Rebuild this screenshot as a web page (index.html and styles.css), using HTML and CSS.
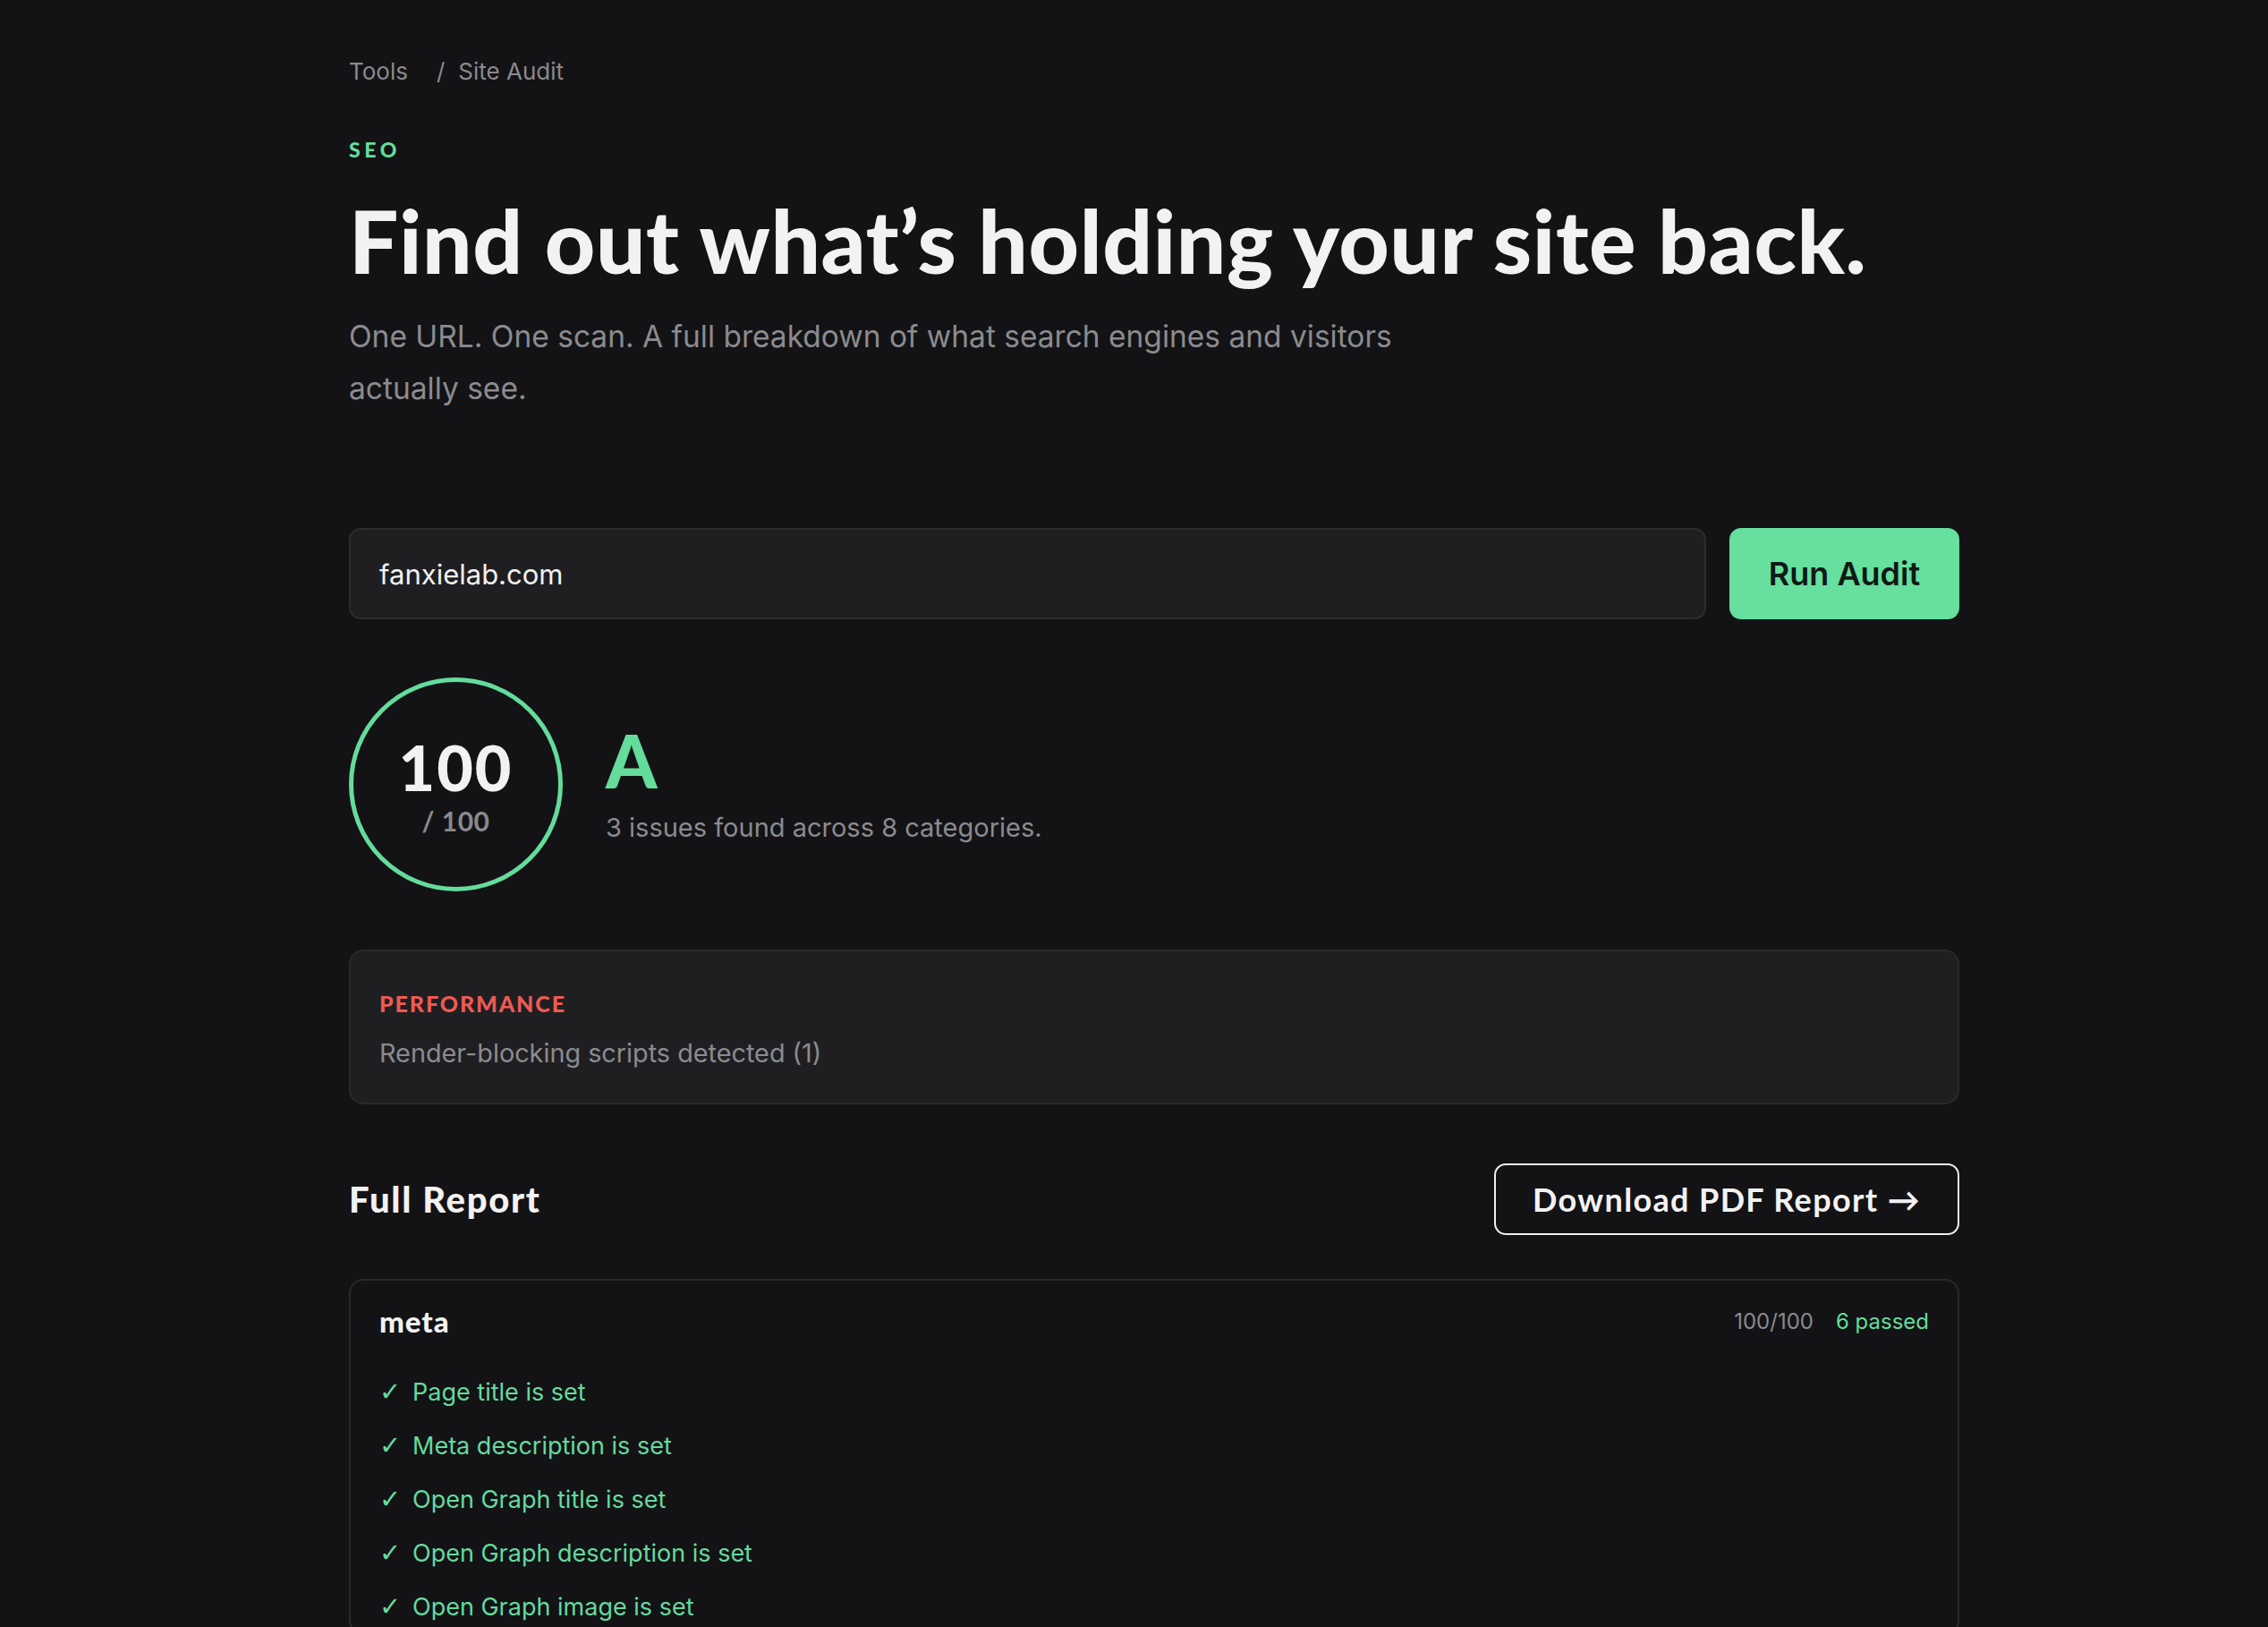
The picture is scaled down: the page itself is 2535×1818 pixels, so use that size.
FILE: index.html
```html
<!DOCTYPE html>
<html lang="en">
<head>
<meta charset="utf-8">
<title>Site Audit</title>
<link rel="stylesheet" href="styles.css">
</head>
<body>
<main class="page">
  <nav class="crumbs">
    <span class="crumb">Tools</span>
    <span class="sep">/</span>
    <span class="crumb">Site Audit</span>
  </nav>
  <div class="eyebrow">SEO</div>
  <h1 class="title">Find out what’s holding your site back.</h1>
  <p class="lead">One URL. One scan. A full breakdown of what search engines and visitors actually see.</p>

  <form class="scan">
    <div class="url-field">fanxielab.com</div>
    <button type="button" class="run">Run Audit</button>
  </form>

  <section class="score">
    <div class="ring">
      <div class="ring-num">100</div>
      <div class="ring-of">/ 100</div>
    </div>
    <div class="grade">
      <div class="grade-letter">A</div>
      <div class="grade-text">3 issues found across 8 categories.</div>
    </div>
  </section>

  <section class="issue">
    <div class="issue-cat">PERFORMANCE</div>
    <div class="issue-text">Render-blocking scripts detected (1)</div>
  </section>

  <div class="report-head">
    <h2 class="report-title">Full Report</h2>
    <button type="button" class="download">Download PDF Report →</button>
  </div>

  <section class="group">
    <div class="group-head">
      <div class="group-name">meta</div>
      <div class="group-stats"><span class="stat-score">100/100</span><span class="stat-pass">6 passed</span></div>
    </div>
    <ul class="checks">
      <li><span class="tick">✓</span>Page title is set</li>
      <li><span class="tick">✓</span>Meta description is set</li>
      <li><span class="tick">✓</span>Open Graph title is set</li>
      <li><span class="tick">✓</span>Open Graph description is set</li>
      <li><span class="tick">✓</span>Open Graph image is set</li>
    </ul>
  </section>
</main>
</body>
</html>
```
FILE: styles.css
```css
html, body {
  margin: 0;
  padding: 0;
  background: #131315;
  color: #f1f1f1;
  font-family: Inter, "Liberation Sans", sans-serif;
  height: 100%;
  overflow: hidden;
}

.page {
  width: 1800px;
  margin-left: 390px;
  padding-top: 60px;
  box-sizing: border-box;
}

.crumbs {
  display: flex;
  align-items: center;
  font-size: 26px;
  line-height: 39px;
  color: #8a8a8d;
}
.sep { margin: 0 15px 0 32px; }

.eyebrow {
  margin-top: 53px;
  font-family: Lato, Inter, sans-serif;
  font-weight: 900;
  font-size: 23px;
  line-height: 30px;
  letter-spacing: 0.2em;
  color: #64dc9c;
}

.title {
  margin: 30px 0 0;
  font-family: Lato, Inter, sans-serif;
  font-weight: 900;
  font-size: 98px;
  line-height: 113px;
  letter-spacing: 0.6px;
  color: #f2f2f2;
}

.lead {
  margin: 22px 0 0;
  max-width: 1240px;
  font-size: 33.5px;
  line-height: 58px;
  color: #8b8b8f;
}

.scan {
  display: flex;
  gap: 26px;
  margin-top: 127px;
  height: 102px;
}
.url-field {
  flex: 1;
  display: flex;
  align-items: center;
  padding-left: 32px;
  background: #1f1f22;
  border: 2px solid #2c2c2f;
  border-radius: 13px;
  font-size: 31px;
  color: #f1f1f1;
}
.run {
  width: 257px;
  border: none;
  border-radius: 13px;
  background: #66df9f;
  color: #0f1a14;
  font-family: Inter, sans-serif;
  font-weight: 600;
  font-size: 36px;
}

.score {
  display: flex;
  align-items: center;
  gap: 48px;
  margin-top: 65px;
}
.ring {
  width: 239px;
  height: 239px;
  box-sizing: border-box;
  padding-bottom: 4px;
  border: 5px solid #64dc9c;
  border-radius: 50%;
  display: flex;
  flex-direction: column;
  align-items: center;
  justify-content: center;
}
.ring-num {
  font-family: Lato, Inter, sans-serif;
  font-weight: 900;
  font-size: 70px;
  line-height: normal;
  letter-spacing: 2px;
  color: #f2f2f2;
}
.ring-of {
  font-family: Lato, Inter, sans-serif;
  font-weight: 700;
  font-size: 30px;
  line-height: normal;
  letter-spacing: 0.5px;
  color: #8a8a8d;
}
.grade {
  display: flex;
  flex-direction: column;
  gap: 15px;
}
.grade-letter {
  font-family: Lato, Inter, sans-serif;
  font-weight: 900;
  font-size: 82px;
  line-height: 81px;
  color: #64dc9c;
}
.grade-text {
  font-size: 29px;
  line-height: 40px;
  color: #8b8b8f;
}

.issue {
  margin-top: 65px;
  height: 173px;
  box-sizing: border-box;
  padding: 43px 32px 0;
  background: #1f1f22;
  border: 2px solid #2a2a2d;
  border-radius: 16px;
}
.issue-cat {
  font-family: Lato, Inter, sans-serif;
  font-weight: 900;
  font-size: 25px;
  line-height: 30px;
  letter-spacing: 0.075em;
  color: #ef5a52;
}
.issue-text {
  margin-top: 21px;
  font-size: 28.8px;
  line-height: 40px;
  color: #8b8b8f;
}

.report-head {
  display: flex;
  justify-content: space-between;
  align-items: center;
  margin-top: 66px;
}
.report-title {
  margin: 0;
  font-family: Lato, Inter, sans-serif;
  font-weight: 900;
  font-size: 40px;
  letter-spacing: 1.7px;
  color: #f2f2f2;
}
.download {
  height: 80px;
  padding: 0 41px;
  background: transparent;
  border: 2px solid #efefef;
  border-radius: 13px;
  color: #f2f2f2;
  font-family: Lato, Inter, sans-serif;
  font-weight: 700;
  font-size: 36px;
  letter-spacing: 1.35px;
}

.group {
  margin-top: 49px;
  padding: 30px 32px 0;
  border: 2px solid #2a2a2d;
  border-radius: 16px;
}
.group-head {
  display: flex;
  justify-content: space-between;
  align-items: center;
  height: 30px;
}
.group-name {
  font-family: Lato, Inter, sans-serif;
  font-weight: 900;
  font-size: 33px;
  letter-spacing: 1px;
  color: #f2f2f2;
}
.group-stats {
  display: flex;
  gap: 25px;
  font-size: 24px;
}
.stat-score { color: #8a8a8d; }
.stat-pass { color: #64dc9c; }

.checks {
  list-style: none;
  margin: 34px 0 0;
  padding: 0;
}
.checks li {
  display: flex;
  align-items: center;
  height: 60px;
  font-size: 27px;
  color: #66d99f;
}
.tick {
  width: 37px;
  font-family: "DejaVu Sans", sans-serif;
  font-size: 29px;
}
```
